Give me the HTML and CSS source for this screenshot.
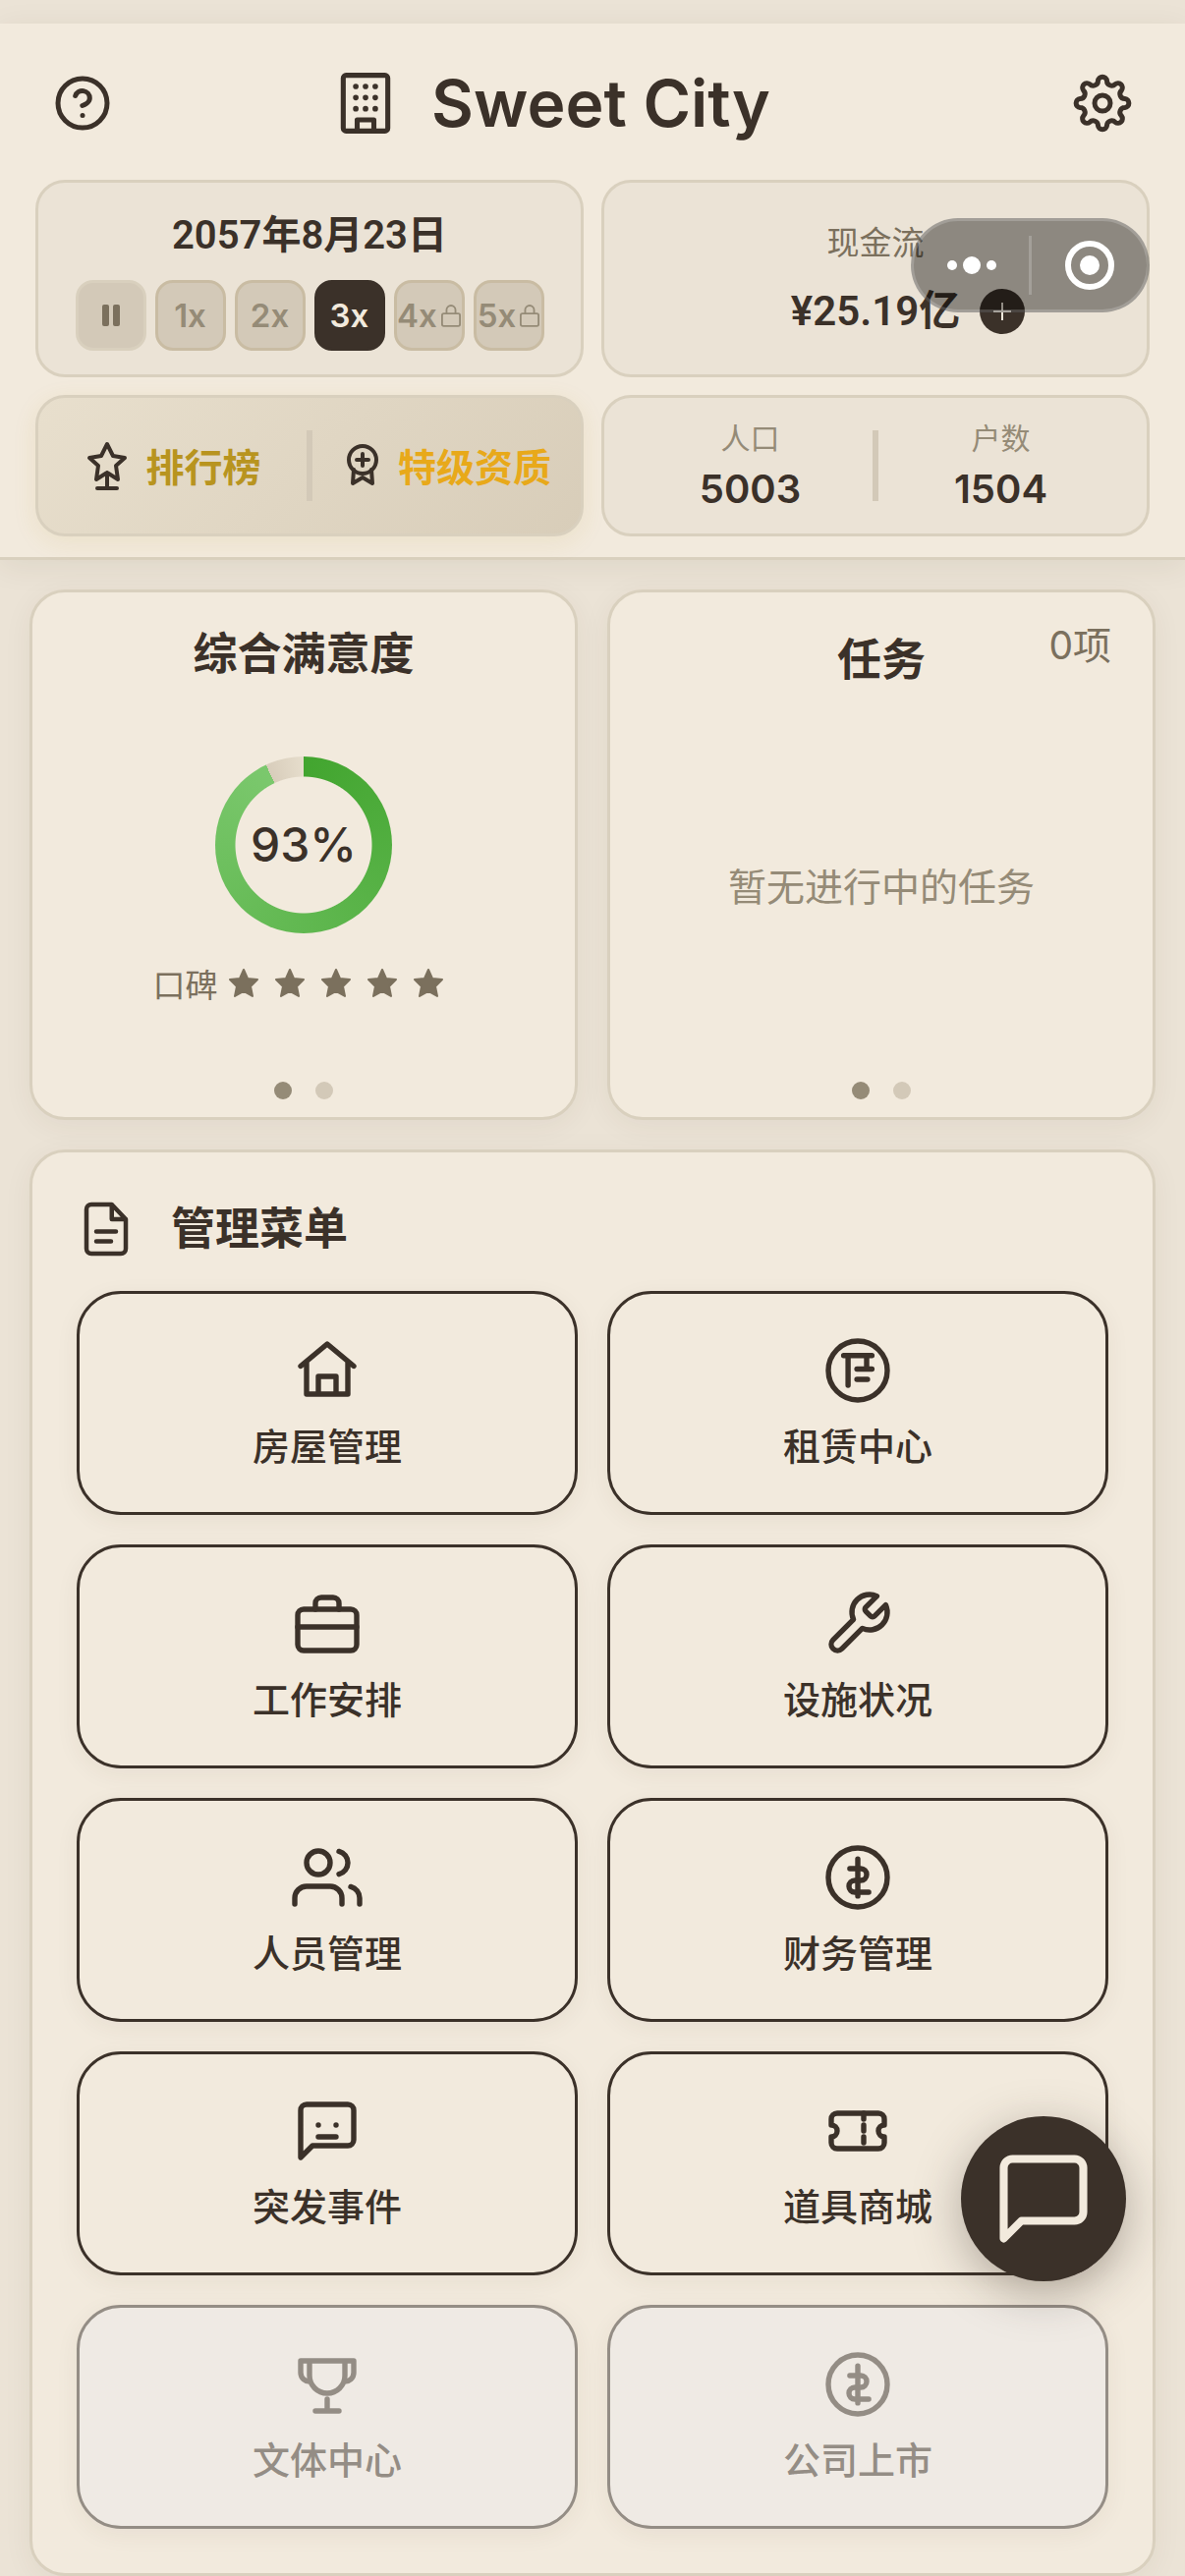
FILE: index.html
```
<!DOCTYPE html>
<html lang="zh-CN">
<head>
    <meta charset="UTF-8">
    <meta name="viewport" content="width=device-width, initial-scale=1.0">
    <title>Sweet City</title>
    <link rel="stylesheet" href="styles.css">
</head>
<body>
    <header class="header">
        <div class="title-bar">
            <button class="icon-btn" aria-label="帮助">
                <svg class="icon icon-md" viewBox="0 0 24 24"><circle cx="12" cy="12" r="10"/><path d="M9.09 9a3 3 0 0 1 5.83 1c0 2-3 3-3 3M12 17h.01"/></svg>
            </button>
            <h1 class="title">
                <svg class="icon icon-building" viewBox="0 0 24 24"><rect x="4" y="2" width="16" height="20" rx="1"/><path d="M9 22v-4h6v4"/><path class="windows" d="M8.5 6h.01M12 6h.01M15.5 6h.01M8.5 10h.01M12 10h.01M15.5 10h.01M8.5 14h.01M12 14h.01M15.5 14h.01"/></svg>
                Sweet City
            </h1>
            <button class="icon-btn" aria-label="设置">
                <svg class="icon icon-md" viewBox="0 0 24 24"><circle cx="12" cy="12" r="3.2"/><path d="M10.19 2.88A1.82 1.82 0 0 1 13.81 2.88A1.95 1.95 0 0 0 17.17 4.27A1.82 1.82 0 0 1 19.73 6.83A1.95 1.95 0 0 0 21.12 10.19A1.82 1.82 0 0 1 21.12 13.81A1.95 1.95 0 0 0 19.73 17.17A1.82 1.82 0 0 1 17.17 19.73A1.95 1.95 0 0 0 13.81 21.12A1.82 1.82 0 0 1 10.19 21.12A1.95 1.95 0 0 0 6.83 19.73A1.82 1.82 0 0 1 4.27 17.17A1.95 1.95 0 0 0 2.88 13.81A1.82 1.82 0 0 1 2.88 10.19A1.95 1.95 0 0 0 4.27 6.83A1.82 1.82 0 0 1 6.83 4.27A1.95 1.95 0 0 0 10.19 2.88z"/></svg>
            </button>
        </div>

        <div class="info-grid">
            <section class="info-card time-card">
                <div class="date">2057年8月23日</div>
                <div class="speeds">
                    <button class="speed pause" aria-label="暂停">
                        <svg class="pause-icon" viewBox="0 0 18 22"><rect width="7" height="22" rx="2"/><rect x="11" width="7" height="22" rx="2"/></svg>
                    </button>
                    <button class="speed">1x</button>
                    <button class="speed">2x</button>
                    <button class="speed active">3x</button>
                    <button class="speed locked">4x<svg class="lock" viewBox="0 0 22 26"><rect x="1" y="11" width="20" height="14" rx="2"/><path d="M6 11V7a5 5 0 0 1 10 0v4"/></svg></button>
                    <button class="speed locked">5x<svg class="lock" viewBox="0 0 22 26"><rect x="1" y="11" width="20" height="14" rx="2"/><path d="M6 11V7a5 5 0 0 1 10 0v4"/></svg></button>
                </div>
            </section>

            <section class="info-card cash-card">
                <div class="cash-label">现金流</div>
                <div class="cash-row">
                    <span class="cash">¥25.19亿</span>
                    <button class="plus" aria-label="充值">
                        <svg viewBox="0 0 18 18"><path d="M9 0v18M0 9h18"/></svg>
                    </button>
                </div>
            </section>

            <section class="info-card rank-card">
                <button class="rank">
                    <svg class="icon rank-icon" viewBox="0 0 48 54"><path d="M24 5l6 12 12 2-9 8 2 14-11-7-11 7 2-14-9-8 12-2zM24 34v16M14 50h20"/></svg>
                    <span>排行榜</span>
                </button>
                <i class="divider"></i>
                <button class="rank gold">
                    <svg class="icon badge-icon" viewBox="3 0 42 48"><circle cx="24" cy="18" r="14"/><path d="M24 12v12M18 18h12M15 28l-1 14 10-6 10 6-1-14"/></svg>
                    <span>特级资质</span>
                </button>
            </section>

            <section class="info-card stat-card">
                <div class="stat"><span class="stat-label">人口</span><span class="stat-value">5003</span></div>
                <i class="divider"></i>
                <div class="stat"><span class="stat-label">户数</span><span class="stat-value">1504</span></div>
            </section>
        </div>
    </header>

    <main class="main">
        <div class="panels">
            <section class="panel">
                <h2 class="panel-title">综合满意度</h2>
                <div class="panel-body">
                    <div class="ring"><span class="ring-value">93%</span></div>
                    <div class="rating">
                        <span>口碑</span>
                        <svg class="star" viewBox="0 0 30 29"><path d="M15 1l4 9 10 1-7 7 2 10-9-5-9 5 2-10-7-7 10-1z"/></svg>
                        <svg class="star" viewBox="0 0 30 29"><path d="M15 1l4 9 10 1-7 7 2 10-9-5-9 5 2-10-7-7 10-1z"/></svg>
                        <svg class="star" viewBox="0 0 30 29"><path d="M15 1l4 9 10 1-7 7 2 10-9-5-9 5 2-10-7-7 10-1z"/></svg>
                        <svg class="star" viewBox="0 0 30 29"><path d="M15 1l4 9 10 1-7 7 2 10-9-5-9 5 2-10-7-7 10-1z"/></svg>
                        <svg class="star" viewBox="0 0 30 29"><path d="M15 1l4 9 10 1-7 7 2 10-9-5-9 5 2-10-7-7 10-1z"/></svg>
                    </div>
                </div>
                <div class="dots"><i class="dot on"></i><i class="dot"></i></div>
            </section>

            <section class="panel tasks">
                <h2 class="panel-title">任务</h2>
                <span class="task-count">0项</span>
                <div class="panel-body empty">暂无进行中的任务</div>
                <div class="dots"><i class="dot on"></i><i class="dot"></i></div>
            </section>
        </div>

        <section class="menu">
            <h2 class="menu-title">
                <svg class="icon icon-doc" viewBox="0 0 24 24"><path d="M14.3 2H6a2 2 0 0 0-2 2v16a2 2 0 0 0 2 2h12a2 2 0 0 0 2-2V8zM14.3 2v6H20M8 13h8M8 17h6"/></svg>
                <span>管理菜单</span>
            </h2>
            <div class="menu-grid">
                <button class="menu-item">
                    <svg class="icon" viewBox="0 0 24 24"><path d="M3 10.5L12 3l9 7.5M5 9v11h14V9M9 20v-6h6v6"/></svg>
                    房屋管理
                </button>
                <button class="menu-item">
                    <svg class="icon" viewBox="0 0 24 24"><circle cx="12" cy="12" r="10"/><path d="M7.2 6.9h9.6M8.7 6.9V17M15 6.9v4.4M11.7 11.5h5.1M11.7 15h3.6"/></svg>
                    租赁中心
                </button>
                <button class="menu-item">
                    <svg class="icon" viewBox="0 0 24 24"><rect x="2" y="7" width="20" height="14" rx="2"/><path d="M8 7V5a2 2 0 0 1 2-2h4a2 2 0 0 1 2 2v2M2 13h20"/></svg>
                    工作安排
                </button>
                <button class="menu-item">
                    <svg class="icon" viewBox="0 0 24 24"><path d="M14.7 6.3a1 1 0 0 0 0 1.4l1.6 1.6a1 1 0 0 0 1.4 0l3.77-3.77a6 6 0 0 1-7.94 7.94l-6.91 6.91a2.12 2.12 0 0 1-3-3l6.91-6.91a6 6 0 0 1 7.94-7.94l-3.76 3.76z"/></svg>
                    设施状况
                </button>
                <button class="menu-item">
                    <svg class="icon" viewBox="0 0 24 24"><path d="M17 21v-2a4 4 0 0 0-4-4H5a4 4 0 0 0-4 4v2M23 21v-2a4 4 0 0 0-3-3.87M16 3.13a4 4 0 0 1 0 7.75"/><circle cx="9" cy="7" r="4"/></svg>
                    人员管理
                </button>
                <button class="menu-item">
                    <svg class="icon" viewBox="0 0 24 24"><circle cx="12" cy="12" r="10"/><path d="M12 5.7v12.6M9.3 9H13a2 2 0 0 1 0 4h-2a2 2 0 0 0 0 4h4.7"/></svg>
                    财务管理
                </button>
                <button class="menu-item">
                    <svg class="icon" viewBox="0 0 24 24"><path d="M21 15a2 2 0 0 1-2 2H7l-4 4V5a2 2 0 0 1 2-2h14a2 2 0 0 1 2 2zM9 10h.01M15 10h.01M9 14h6"/></svg>
                    突发事件
                </button>
                <button class="menu-item">
                    <svg class="icon" viewBox="0 0 24 24"><path d="M3 8a2 2 0 0 1 2-2h14a2 2 0 0 1 2 2v2a2 2 0 0 0 0 4v2a2 2 0 0 1-2 2H5a2 2 0 0 1-2-2v-2a2 2 0 0 0 0-4z"/><path d="M14 6v11" stroke-dasharray="2 2"/></svg>
                    道具商城
                </button>
                <button class="menu-item disabled" disabled>
                    <svg class="icon" viewBox="0 0 24 24"><path d="M6 4h12v5a6 6 0 0 1-12 0zM6 4H3v4a3 3 0 0 0 3.3 3M18 4h3v4a3 3 0 0 1-3.3 3M12 17v4M8 21h8"/></svg>
                    文体中心
                </button>
                <button class="menu-item disabled" disabled>
                    <svg class="icon" viewBox="0 0 24 24"><circle cx="12" cy="12" r="10"/><path d="M12 5.7v12.6M9.3 9H13a2 2 0 0 1 0 4h-2a2 2 0 0 0 0 4h4.7"/></svg>
                    公司上市
                </button>
            </div>
        </section>
    </main>

    <!-- floating controls -->
    <div class="capsule">
        <button class="capsule-btn" aria-label="更多">
            <svg viewBox="0 0 50 18"><circle cx="5" cy="9" r="5"/><circle cx="25" cy="9" r="9"/><circle cx="45" cy="9" r="5"/></svg>
        </button>
        <button class="capsule-btn" aria-label="关闭">
            <svg viewBox="0 0 50 50"><circle class="capsule-ring" cx="25" cy="25" r="22"/><circle cx="25" cy="25" r="10"/></svg>
        </button>
    </div>
    <button class="chat" aria-label="聊天">
        <svg class="icon" viewBox="0 0 24 24"><path d="M21 15a2 2 0 0 1-2 2H7l-4 4V5a2 2 0 0 1 2-2h14a2 2 0 0 1 2 2z"/></svg>
    </button>
</body>
</html>
```
FILE: styles.css
```
* {
    box-sizing: border-box;
}
body {
    margin: 0;
    padding-top: 24px;
    background: #ebe3d6;
    color: #3b3129;
    font-family: "Noto Sans CJK SC", sans-serif;
}
h1, h2 {
    margin: 0;
}
button {
    padding: 0;
    border: none;
    background: none;
    color: inherit;
    font: inherit;
    cursor: pointer;
}
svg {
    display: block;
    flex: none;
}
.icon {
    width: 72px;
    height: 72px;
    fill: none;
    stroke: currentColor;
    stroke-width: 1.8;
    stroke-linecap: round;
    stroke-linejoin: round;
}

/* header */
.header {
    padding: 45px 36px 21px;
    background: #f2eadd;
    border-bottom: 3px solid #d9d0be;
    box-shadow: 0 6px 30px rgba(60, 50, 30, 0.08);
}
.title-bar {
    display: flex;
    align-items: center;
    padding: 0 18px;
    margin-bottom: 42px;
}
.icon-md {
    width: 60px;
    height: 60px;
    stroke-width: 2;
}
.title {
    flex: 1;
    display: flex;
    align-items: center;
    justify-content: center;
    gap: 33px;
    padding-right: 84px;
    font: 600 66px/72px Inter, sans-serif;
}
.icon-building {
    width: 68px;
    height: 68px;
}
.windows {
    stroke-width: 2;
}
.info-grid {
    display: grid;
    grid-template-columns: 1fr 1fr;
    gap: 18px;
}
.info-card {
    display: flex;
    border: 3px solid #d9d0be;
    border-radius: 30px;
    background: #ebe3d6;
}
.time-card {
    flex-direction: column;
    align-items: center;
    gap: 18px;
    padding: 27px 0 24px;
}
.date {
    font: 600 40px/54px Roboto, "Noto Sans CJK SC", sans-serif;
}
.speeds {
    display: flex;
    gap: 9px;
}
.speed {
    display: flex;
    align-items: center;
    justify-content: center;
    width: 72px;
    height: 72px;
    border: 3px solid #c9bca3;
    border-radius: 18px;
    background: #d3c9b8;
    color: #958b77;
    font: 600 33px/36px Inter, sans-serif;
}
.speed.pause {
    border-color: #d9d0be;
}
.speed.active {
    border-color: #3b3129;
    background: #3b3129;
    color: #f2eadd;
}
.speed.locked {
    gap: 4px;
}
.pause-icon {
    width: 18px;
    height: 22px;
    fill: #7b705d;
}
.lock {
    width: 20px;
    height: 24px;
    fill: none;
    stroke: currentColor;
    stroke-width: 2;
}
.cash-card {
    flex-direction: column;
    justify-content: center;
    gap: 18px;
}
.cash-label {
    text-align: center;
    color: #7b705d;
    font-size: 33px;
    line-height: 48px;
}
.cash-row {
    display: grid;
    grid-template-columns: 1fr auto 1fr;
    align-items: center;
    gap: 20px;
}
.cash {
    grid-column: 2;
    font: 600 42px/60px Roboto, "Noto Sans CJK SC", sans-serif;
}
.plus {
    display: flex;
    align-items: center;
    justify-content: center;
    width: 46px;
    height: 46px;
    border-radius: 50%;
    background: #3b3129;
}
.plus svg {
    width: 18px;
    height: 18px;
    stroke: #f2eadd;
    stroke-width: 2;
}
.rank-card,
.stat-card {
    align-items: center;
    height: 144px;
}
.rank-card {
    background: linear-gradient(135deg, #e8dfcd, #d8cdb9);
    box-shadow: 0 6px 24px rgba(184, 146, 30, 0.1);
}
.rank {
    flex: 1 1 0;
    display: flex;
    align-items: center;
    justify-content: center;
    gap: 15px;
    color: #b8941f;
    font-size: 39px;
    font-weight: 700;
    line-height: 54px;
    white-space: nowrap;
}
.rank.gold {
    color: #e8a91a;
}
.rank .icon {
    color: #3b3129;
    stroke-width: 4;
}
.rank span {
    padding-bottom: 3px;
}
.rank-icon {
    width: 48px;
    height: 54px;
}
.badge-icon {
    width: 42px;
    height: 48px;
}
.divider {
    width: 6px;
    height: 72px;
    background: #d3c9b8;
}
.stat-card {
    padding: 0 24px;
}
.stat {
    flex: 1;
    display: flex;
    flex-direction: column;
    align-items: center;
    gap: 6px;
}
.stat-label {
    color: #958b77;
    font-size: 30px;
    line-height: 42px;
}
.stat-value {
    font: 600 40px/54px Inter, sans-serif;
}

/* content */
.main {
    display: grid;
    gap: 30px;
    padding: 30px 30px 0;
}
.panels {
    display: grid;
    grid-template-columns: 1fr 1fr;
    gap: 30px;
}
.panel,
.menu {
    border: 3px solid #d9d0be;
    border-radius: 36px;
    background: #f2eadd;
    box-shadow: 0 6px 30px rgba(60, 50, 30, 0.06);
}
.panel {
    position: relative;
    display: flex;
    flex-direction: column;
    align-items: center;
    height: 540px;
    padding: 30px 42px 18px;
}
.panel-title {
    font-size: 45px;
    line-height: 60px;
}
.tasks .panel-title {
    line-height: 72px;
}
.task-count {
    position: absolute;
    top: 27px;
    right: 42px;
    color: #7b705d;
    font: 39px/54px Inter, "Noto Sans CJK SC", sans-serif;
}
.panel-body {
    flex: 1;
    display: flex;
    flex-direction: column;
    align-items: center;
    justify-content: center;
    gap: 24px;
    padding-top: 3px;
}
.empty {
    padding: 0 0 6px;
    color: #958b77;
    font-size: 39px;
}
.ring {
    display: grid;
    place-items: center;
    width: 180px;
    height: 180px;
    border-radius: 50%;
    background:
        radial-gradient(circle, #f2eadd 69px, transparent 70px),
        conic-gradient(#42a52f, #7bc86d 93%, #d8cdbb 93%, #e6ddcc);
}
.ring-value {
    font: 500 48px/60px Inter, sans-serif;
}
.rating {
    display: flex;
    align-items: center;
    gap: 17px;
    padding-right: 12px;
    color: #7b705d;
    font-size: 33px;
    line-height: 54px;
}
.rating span {
    margin-right: -6px;
}
.star {
    width: 30px;
    height: 29px;
    fill: #7b705d;
    stroke: #7b705d;
    stroke-width: 2;
    stroke-linejoin: round;
}
.dots {
    display: flex;
    gap: 24px;
}
.dot {
    width: 18px;
    height: 18px;
    border-radius: 50%;
    background: #d3c9b8;
}
.dot.on {
    background: #958b77;
}

/* menu */
.menu {
    padding: 45px;
}
.menu-title {
    display: flex;
    align-items: center;
    gap: 36px;
    margin-bottom: 30px;
    font-size: 45px;
    line-height: 60px;
}
.menu-title span {
    padding-bottom: 6px;
}
.icon-doc {
    width: 60px;
    height: 60px;
}
.menu-grid {
    display: grid;
    grid-template-columns: 1fr 1fr;
    gap: 30px;
}
.menu-item {
    display: flex;
    flex-direction: column;
    align-items: center;
    gap: 12px;
    padding: 42px;
    border: 3px solid #3b3129;
    border-radius: 45px;
    background: #f2eadd;
    box-shadow: 0 6px 24px rgba(60, 50, 30, 0.06);
    font-size: 38px;
    font-weight: 500;
    line-height: 54px;
}
.menu-item.disabled {
    border-color: #948d85;
    background: #efeae4;
    color: #948d85;
}

/* floating controls */
.capsule {
    position: absolute;
    top: 222px;
    right: 36px;
    display: flex;
    align-items: center;
    width: 243px;
    height: 96px;
    border: 3px solid rgba(255, 255, 255, 0.18);
    border-radius: 48px;
    background: rgba(0, 0, 0, 0.4);
}
.capsule-btn {
    flex: 1;
    display: flex;
    align-items: center;
    justify-content: center;
    height: 60px;
}
.capsule-btn + .capsule-btn {
    border-left: 3px solid rgba(255, 255, 255, 0.2);
}
.capsule-btn svg {
    width: 50px;
    fill: #fff;
}
.capsule-btn .capsule-ring {
    fill: none;
    stroke: #fff;
    stroke-width: 6;
}
.chat {
    position: fixed;
    right: 60px;
    bottom: 300px;
    display: flex;
    align-items: center;
    justify-content: center;
    width: 168px;
    height: 168px;
    border-radius: 50%;
    background: #3b3129;
    color: #f2eadd;
    box-shadow: 0 12px 48px rgba(60, 50, 40, 0.35);
}
.chat .icon {
    width: 108px;
    height: 108px;
}
```
